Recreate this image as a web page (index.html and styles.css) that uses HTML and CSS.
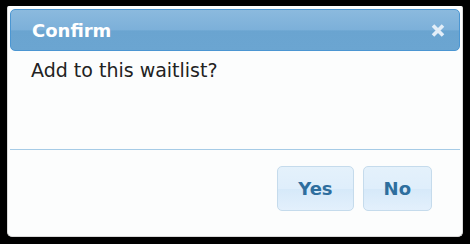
FILE: index.html
```html
<!DOCTYPE html>
<html lang="en">

<head>
    <meta charset="UTF-8" />
    <title>Confirm</title>
    <link rel="stylesheet" href="styles.css">
</head>

<body>

    <div class="dialog">
        <div class="titlebar">
            <span class="title">Confirm</span>
            <button class="close" title="Close">
                <svg width="14" height="13" viewBox="0 0 14 13">
                    <path d="M2 1.5 L12 11.5 M12 1.5 L2 11.5" stroke="#e3eef8" stroke-width="3.6" stroke-linecap="butt" fill="none" />
                </svg>
            </button>
        </div>

        <div class="content">Add to this waitlist?</div>

        <div class="buttonpane">
            <button class="btn">Yes</button>
            <button class="btn">No</button>
        </div>
    </div>

</body>

</html>
```

FILE: styles.css
```css
body {
    margin: 0;
    background: #000;
    font-family: "DejaVu Sans", Verdana, sans-serif;
}

/* dialog box */
.dialog {
    box-sizing: border-box;
    width: 456px;
    height: 231px;
    margin: 6px 0 0 7px;
    padding: 2px;
    background: #fcfdfd;
    border: 1px solid #d9d9d9;
    border-top-color: #fff;
    border-radius: 2px 2px 5px 5px;
    display: flex;
    flex-direction: column;
}

.titlebar {
    height: 42px;
    box-sizing: border-box;
    border: 1px solid #4b96d2;
    border-radius: 5px;
    background: linear-gradient(#8bbade, #7cb0d9 50%, #6aa4d0 52%, #6ba5d1);
    display: flex;
    align-items: center;
    justify-content: space-between;
    padding: 0 14px 0 21px;
}

.title {
    color: #fff;
    font-weight: bold;
    font-size: 18px;
}

.close {
    border: 0;
    background: none;
    padding: 0;
    width: 14px;
    height: 13px;
    display: flex;
}

.content {
    height: 99px;
    box-sizing: border-box;
    padding: 8px 21px 0;
    font-size: 19px;
    color: #222;
    border-bottom: 1px solid #a6cbe6;
}

.buttonpane {
    display: flex;
    justify-content: flex-end;
    gap: 9px;
    padding: 16px 28px 0 0;
}

.btn {
    height: 45px;
    padding: 0 20px;
    border: 1px solid #c5dbec;
    border-radius: 5px;
    background: linear-gradient(#e4f1fb, #dfeefb 50%, #d6e9f9 52%, #e3f0fc);
    color: #2e6e9e;
    font-family: "DejaVu Sans", Verdana, sans-serif;
    font-weight: bold;
    font-size: 18px;
}
```
